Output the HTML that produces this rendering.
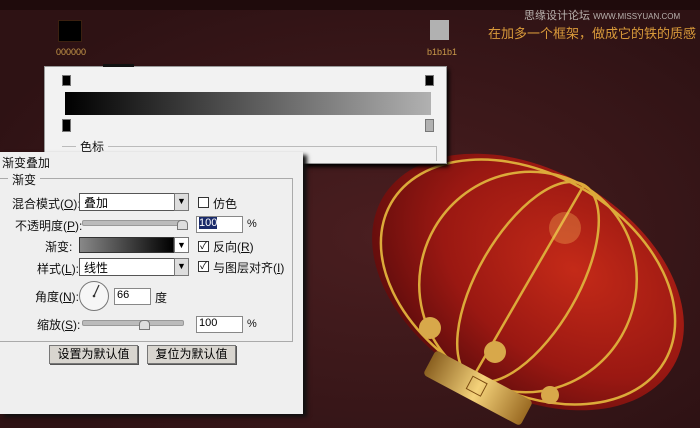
<!DOCTYPE html>
<html style="overflow:hidden"><head><meta charset="utf-8"><style>
html,body{margin:0;width:700px;height:428px;overflow:hidden}
body{background:#3a1719;font-family:"Liberation Sans","Noto Sans CJK SC",sans-serif;position:relative}
.a{position:absolute}
.t{font-size:12px;color:#111;white-space:nowrap}
.sel{background:#fff;border:1px solid #555;border-right:none;box-sizing:border-box}
.dd{background:#ddd;border:1px solid #777;box-sizing:border-box;font-size:9px;text-align:center;line-height:15px}
.cb{width:11px;height:11px;border:1px solid #333;background:#fff;box-sizing:border-box;font-size:10px;line-height:9px;text-align:center}
.inp{background:#fff;border:1px solid #888;box-sizing:border-box;font-size:11px;padding-left:2px}
.btn{background:#d8d5cf;border:1px solid #777;box-sizing:border-box;font-size:12px;text-align:center;line-height:17px;box-shadow:1px 1px 0 #555}
.sl{height:4px;background:#bbb;border:1px solid #999;border-radius:2px}
</style></head><body>
<div class="a" style="left:0;top:0;width:700px;height:428px;background:radial-gradient(ellipse at 55% 55%,#4a1e20,#2e1214 80%)"></div>
<div class="a" style="left:0;top:0;width:700px;height:10px;background:#1f0b0c"></div>
<div class="a" style="left:58px;top:20px;width:22px;height:20px;background:#000;border:1px solid #3b2010"></div>
<div class="a" style="left:56px;top:47px;font-size:9px;color:#c99a4a">000000</div>
<div class="a" style="left:430px;top:20px;width:19px;height:20px;background:#b1b1b1"></div>
<div class="a" style="left:427px;top:47px;font-size:9px;color:#c99a4a">b1b1b1</div>
<div class="a" style="left:524px;top:7px;font-size:11px;color:#b9b2ae">思缘设计论坛 <span style="font-size:8px">WWW.MISSYUAN.COM</span></div>
<div class="a" style="left:488px;top:23px;font-size:13px;color:#d99a3a">在加多一个框架，做成它的铁的质感</div>

<svg class="a" style="left:0;top:0" width="700" height="428">
<defs>
<radialGradient id="r" cx="0.6" cy="0.35" r="0.7"><stop offset="0" stop-color="#c42a18"/><stop offset="0.6" stop-color="#9a1812"/><stop offset="1" stop-color="#5e0c0c"/></radialGradient>
<linearGradient id="g" x1="0" x2="1"><stop offset="0" stop-color="#8a6020"/><stop offset="0.5" stop-color="#f4d27a"/><stop offset="1" stop-color="#9a6a22"/></linearGradient>
</defs>
<g transform="translate(528,282) rotate(30)">
<ellipse rx="168" ry="112" fill="url(#r)"/>
<g fill="none" stroke="#dcaa3a" stroke-width="2.5">
<ellipse rx="158" ry="108"/>
<ellipse rx="108" ry="111"/>
<ellipse rx="50" ry="112"/>
<line x1="0" y1="-112" x2="0" y2="112"/>
</g>
</g>
<circle cx="565" cy="228" r="16" fill="#ffc860" opacity="0.3"/>
<g transform="translate(478,388) rotate(28)">
<rect x="-55" y="-14" width="110" height="28" rx="4" fill="url(#g)"/>
<rect x="-10" y="-8" width="16" height="14" fill="none" stroke="#7a4a10"/>
</g>
<circle cx="430" cy="328" r="11" fill="#d8a84a"/><circle cx="495" cy="352" r="11" fill="#d8a84a"/><circle cx="550" cy="395" r="9" fill="#d8a84a"/>
</svg>

<!-- gradient popup -->
<div class="a" style="left:44px;top:66px;width:401px;height:96px;background:#f2f2f2;border:1px solid #999;box-shadow:2px 3px 4px #000"></div>
<div class="a" style="left:103px;top:64px;width:31px;height:3px;background:#111"></div>
<div class="a" style="left:62px;top:75px;width:7px;height:9px;background:#000;border:1px solid #777"></div>
<div class="a" style="left:425px;top:75px;width:7px;height:9px;background:#000;border:1px solid #777"></div>
<div class="a" style="left:65px;top:92px;width:366px;height:23px;background:linear-gradient(90deg,#000,#b1b1b1)"></div>
<div class="a" style="left:62px;top:119px;width:7px;height:11px;background:#000;border:1px solid #777"></div>
<div class="a" style="left:425px;top:119px;width:7px;height:11px;background:#b1b1b1;border:1px solid #777"></div>
<div class="a" style="left:62px;top:146px;width:375px;border-top:1px solid #bbb"></div>
<div class="a" style="left:436px;top:146px;height:15px;border-left:1px solid #bbb"></div>
<div class="a t" style="left:76px;top:138px;background:#f2f2f2;padding:0 4px">色标</div>

<!-- panel -->
<div class="a" style="left:0;top:152px;width:303px;height:262px;background:#efefef;box-shadow:4px 3px 4px #111"></div>
<div class="a t" style="left:2px;top:154px">渐变叠加</div>
<div class="a" style="left:0;top:178px;width:292px;height:162px;border:1px solid #aaa;border-left:none"></div>
<div class="a t" style="left:8px;top:171px;background:#efefef;padding:0 4px">渐变</div>

<div class="a t" style="left:12px;top:195px">混合模式(<u>O</u>):</div>
<div class="a sel" style="left:79px;top:193px;width:96px;height:18px;font-size:12px;padding-left:4px">叠加</div>
<div class="a dd" style="left:174px;top:193px;width:15px;height:18px">▼</div>
<div class="a cb" style="left:198px;top:197px"></div>
<div class="a t" style="left:213px;top:195px">仿色</div>

<div class="a t" style="left:15px;top:217px">不透明度(<u>P</u>):</div>
<div class="a sl" style="left:82px;top:220px;width:100px"></div>
<div class="a" style="left:177px;top:220px;width:9px;height:8px;background:#ddd;border:1px solid #777;border-radius:4px 4px 0 0"></div>
<div class="a inp" style="left:196px;top:216px;width:47px;height:17px"><span style="background:#1a2a6a;color:#fff">100</span></div>
<div class="a t" style="left:247px;top:218px;font-size:11px">%</div>

<div class="a t" style="left:45px;top:238px">渐变:</div>
<div class="a" style="left:79px;top:237px;width:95px;height:16px;border:1px solid #333;box-sizing:border-box;background:linear-gradient(90deg,#888,#000)"></div>
<div class="a dd" style="left:174px;top:237px;width:15px;height:16px;background:#fff">▼</div>
<div class="a cb" style="left:198px;top:241px">✓</div>
<div class="a t" style="left:213px;top:238px">反向(<u>R</u>)</div>

<div class="a t" style="left:37px;top:260px">样式(<u>L</u>):</div>
<div class="a sel" style="left:79px;top:258px;width:96px;height:18px;font-size:12px;padding-left:4px">线性</div>
<div class="a dd" style="left:174px;top:258px;width:15px;height:18px">▼</div>
<div class="a cb" style="left:198px;top:261px">✓</div>
<div class="a t" style="left:213px;top:259px">与图层对齐(<u>I</u>)</div>

<div class="a t" style="left:35px;top:288px">角度(<u>N</u>):</div>
<div class="a" style="left:79px;top:281px;width:30px;height:30px;border-radius:50%;border:1px solid #777;background:#f6f6f6;box-sizing:border-box"></div>
<svg class="a" style="left:79px;top:281px" width="30" height="30"><line x1="15" y1="15" x2="20" y2="4" stroke="#333" stroke-width="1.2"/><circle cx="15" cy="15" r="1.3" fill="#333"/></svg>
<div class="a inp" style="left:114px;top:288px;width:37px;height:17px">66</div>
<div class="a t" style="left:155px;top:289px">度</div>

<div class="a t" style="left:37px;top:316px">缩放(<u>S</u>):</div>
<div class="a sl" style="left:82px;top:320px;width:100px"></div>
<div class="a" style="left:139px;top:320px;width:9px;height:8px;background:#ddd;border:1px solid #777;border-radius:4px 4px 0 0"></div>
<div class="a inp" style="left:196px;top:316px;width:47px;height:17px">100</div>
<div class="a t" style="left:247px;top:318px;font-size:11px">%</div>

<div class="a btn" style="left:49px;top:345px;width:89px;height:19px">设置为默认值</div>
<div class="a btn" style="left:147px;top:345px;width:89px;height:19px">复位为默认值</div>
</body></html>
